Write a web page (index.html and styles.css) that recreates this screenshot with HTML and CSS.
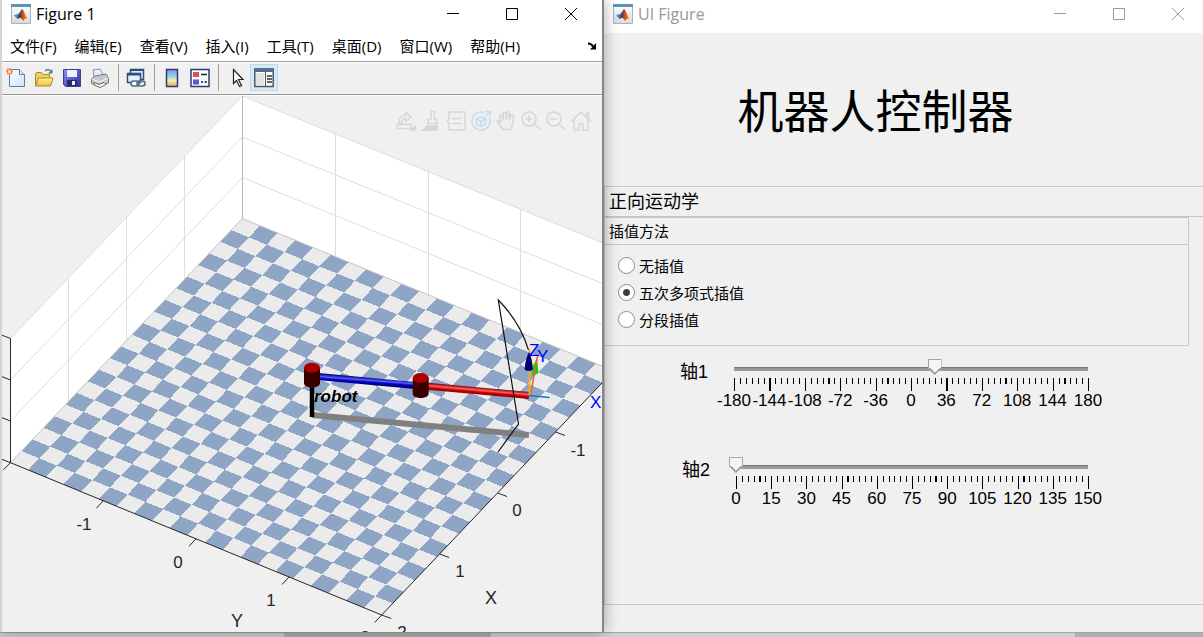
FILE: index.html
```html
<!DOCTYPE html>
<html lang="zh-CN">
<head>
<meta charset="utf-8">
<title>机器人控制器</title>
<link rel="stylesheet" href="styles.css">
</head>
<body>
<svg class="defs" aria-hidden="true">
  <defs>
    <linearGradient id="paper" x1="0" y1="0" x2="1" y2="1"><stop offset="0" stop-color="#fff"/><stop offset="1" stop-color="#cfe0f5"/></linearGradient>
    <linearGradient id="frame" x1="0" y1="0" x2="0" y2="1"><stop offset="0" stop-color="#fff"/><stop offset="1" stop-color="#d6dade"/></linearGradient>
    <linearGradient id="flame" x1="0" y1="0" x2="1" y2="0"><stop offset="0" stop-color="#8c1d10"/><stop offset=".5" stop-color="#e0591c"/><stop offset="1" stop-color="#f6a032"/></linearGradient>
    <linearGradient id="map" x1="0" y1="0" x2="0" y2="1"><stop offset="0" stop-color="#a58be0"/><stop offset=".35" stop-color="#7fd0f0"/><stop offset=".65" stop-color="#f5f0a0"/><stop offset="1" stop-color="#f0a080"/></linearGradient>
    <linearGradient id="disk" x1="0" y1="0" x2="1" y2="1"><stop offset="0" stop-color="#8a90ee"/><stop offset="1" stop-color="#2a2f9c"/></linearGradient>
    <linearGradient id="fold" x1="0" y1="0" x2="0" y2="1"><stop offset="0" stop-color="#fff3a0"/><stop offset="1" stop-color="#f0c030"/></linearGradient>
    <symbol id="logo" viewBox="0 0 20 20">
      <path d="M.5 1h19v18.500h-19z" fill="url(#frame)" stroke="#a9b3bb"/>
      <path d="M0 0h20v3H0z" fill="#5f93b8"/>
      <path d="M3 11.500l5-2 2 2.500-3.500 3z" fill="#3c8cc8"/>
      <path d="M8 9.500l3-4.500-1 8-3.500 2z" fill="#26506e"/>
      <path d="M11 5c2 1 3 7 6 10-2-1-3.500-.5-4.500 2-1-.5-1.500-3-4-3.500 1-2 1.500-6 2.500-8.500z" fill="url(#flame)"/>
    </symbol>
  </defs>
</svg>
<main class="desktop">
  <section class="window window-figure">
    <header class="titlebar">
      <svg class="logo"><use href="#logo"/></svg>
      <h2 class="caption">Figure 1</h2>
      <div class="controls">
        <button class="control" aria-label="最小化"><svg viewBox="0 0 14 14"><path d="M1 6.500h12"/></svg></button>
        <button class="control" aria-label="最大化"><svg viewBox="0 0 14 14"><path d="M1.500 1.500h11v11h-11z"/></svg></button>
        <button class="control" aria-label="关闭"><svg viewBox="0 0 14 14"><path d="M1 1l12 12M13 1L1 13"/></svg></button>
      </div>
    </header>
    <nav class="menu">
      <button class="menu-item">文件(F)</button>
      <button class="menu-item">编辑(E)</button>
      <button class="menu-item">查看(V)</button>
      <button class="menu-item">插入(I)</button>
      <button class="menu-item">工具(T)</button>
      <button class="menu-item">桌面(D)</button>
      <button class="menu-item">窗口(W)</button>
      <button class="menu-item">帮助(H)</button>
      <button class="dock" aria-label="停靠"><svg viewBox="0 0 10 8"><path d="M1 1.500c3 0 4 1 5 3" fill="none" stroke="#000" stroke-width="2"/><path d="M9 1v6.500H3z"/></svg></button>
    </nav>
    <div class="toolbar">
      <button class="tool" aria-label="新建"><svg viewBox="0 0 20 20"><path d="M3.500 1.500h10l5 5v12h-15z" fill="url(#paper)" stroke="#5d7ba5"/><path d="M13.500 1.500v5h5" fill="#dbe8f8" stroke="#5d7ba5"/><path d="M3.500 0v7M0 3.500h7M1 1l5 5M6 1L1 6" stroke="#e8783c" stroke-width="1.300"/><circle cx="3.500" cy="3.500" r="1.500" fill="#fff0b0"/></svg></button>
      <button class="tool" aria-label="打开"><svg viewBox="0 0 20 20"><path d="M1.500 17.500V5.500l1-1h5l2 2h6v4" fill="#f0d060" stroke="#b08a20"/><path d="M1.500 18l3-8h14.500l-2.500 8z" fill="url(#fold)" stroke="#b08a20"/><path d="M11 3c2-2 4-2 5.500 0" fill="none" stroke="#5d7590" stroke-width="1.500"/><path d="M18.500 1v4.500h-4.500z" fill="#5d7590"/></svg></button>
      <button class="tool" aria-label="保存"><svg viewBox="0 0 20 20"><path d="M1.500 1.500h17v17h-15l-2-2z" fill="url(#disk)" stroke="#39408f"/><path d="M5 2h10v7H5z" fill="#eef1fb"/><path d="M5 12h10v6H5z" fill="#23296b"/><path d="M10 13h3v4h-3z" fill="#eef1fb"/></svg></button>
      <button class="tool" aria-label="打印"><svg viewBox="0 0 20 20"><path d="M4 9L3 2l7-1 4 7" fill="#e4eefb" stroke="#8495aa"/><path d="M1.500 11L5 8l11-2 2.500 4v5L9 18.500l-7.500-3z" fill="#c6c8ca" stroke="#77797c"/><path d="M2 11l7 3 9.500-4" fill="none" stroke="#f7f7f7"/><path d="M4 14.500l5 2 5-2 2 2-6 3-6-2.500z" fill="#fff" stroke="#66696c"/></svg></button>
      <span class="rule"></span>
      <button class="tool" aria-label="链接"><svg viewBox="0 0 20 20"><path d="M4.500 1.500h13v10h-13z" fill="#dce8f6" stroke="#2c4d7d" stroke-width="1.500"/><path d="M1.500 5.500h13v9h-13z" fill="#e8f1fb" stroke="#2c4d7d" stroke-width="1.500"/><path d="M1 5h14v2.500H1zM4 1h14v2H4z" fill="#2c4d7d"/><rect x="5" y="13" width="8" height="5" rx="2.500" fill="#fff" stroke="#4f6b90" stroke-width="1.600"/><rect x="11" y="13" width="8" height="5" rx="2.500" fill="none" stroke="#4f6b90" stroke-width="1.600"/></svg></button>
      <span class="rule"></span>
      <button class="tool" aria-label="颜色栏"><svg viewBox="0 0 20 20"><path d="M4.500 1.500h11v17h-11z" fill="url(#map)" stroke="#2b3f6d" stroke-width="1.500"/></svg></button>
      <button class="tool" aria-label="图例"><svg viewBox="0 0 20 20"><path d="M1 1.500h18v17H1z" fill="#f7fafe" stroke="#2b3f6d" stroke-width="1.500"/><path d="M3 4h6v5H3z" fill="#e0504c"/><path d="M3 11.500h6v5H3z" fill="#5a5ad8"/><path d="M11 6.500h6M11 14h2M14.500 14h2.500" stroke="#222" stroke-width="1.500"/></svg></button>
      <span class="rule"></span>
      <button class="tool tool-pointer" aria-label="编辑绘图"><svg viewBox="0 0 20 20"><path d="M6.500 1.500v14l3-3 3 6 2-1-3-6h4.500z" fill="#fff" stroke="#222" stroke-width="1.200"/></svg></button>
      <button class="tool tool-active" aria-label="属性检查器"><svg viewBox="0 0 20 20"><path d="M.8 1h18.400v17.500H.8z" fill="#fff" stroke="#4b5660" stroke-width="1.500"/><path d="M.5.5h19V4H.5z" fill="#4d7295"/><path d="M2 5h8v12.500H2z" fill="#e3e3e3"/><path d="M11.500 4v14" stroke="#4b5660"/><path d="M13 8h5M13 11h5M13 14h5" stroke="#333" stroke-width="1.500"/></svg></button>
    </div>
    <div class="plot">
      <svg class="scene" viewBox="2 96 600 537" preserveAspectRatio="xMinYMin slice" role="img" aria-label="机械臂三维图">
        <defs>
          <linearGradient id="linkBlue" gradientUnits="userSpaceOnUse" x1="366" y1="377" x2="365.400" y2="385"><stop offset="0" stop-color="#000070"/><stop offset=".4" stop-color="#5a5aff"/><stop offset=".6" stop-color="#0000c8"/><stop offset="1" stop-color="#000060"/></linearGradient>
          <linearGradient id="linkRed" gradientUnits="userSpaceOnUse" x1="478" y1="387" x2="477.300" y2="395"><stop offset="0" stop-color="#700000"/><stop offset=".4" stop-color="#ff6060"/><stop offset=".6" stop-color="#d00000"/><stop offset="1" stop-color="#700000"/></linearGradient>
        </defs>
        <path d="M10.500 338.500L242.300 96 613.500 248V371L242.300 218.500 10.500 462.700z" fill="#fff"/>
        <path class="grid" d="M10.500 338.500L242.300 96 613.500 247M10.500 380L242.300 137 613.500 288M10.500 421L242.300 177.500 613.500 329M68.500 278V402M126.500 217V341M184.500 156V280M335.500 134V257M428.500 172V295M520.500 210V333"/>
        <path d="M242.500 96V218.500" stroke="#b5b5b5"/>
        <path d="M10.500 462.700L242.300 218.500 613.500 370.800 381.700 615z" fill="#ebebeb"/>
        <g transform="matrix(17.676 7.252 11.038 -11.629 10.500 462.700)" class="tiles">
          <path d="M1 .5H21M1 2.500H21M1 4.500H21M1 6.500H21M1 8.500H21M1 10.500H21M1 12.500H21M1 14.500H21M1 16.500H21M1 18.500H21M1 20.500H21"/>
          <path d="M0 1.500H21M0 3.500H21M0 5.500H21M0 7.500H21M0 9.500H21M0 11.500H21M0 13.500H21M0 15.500H21M0 17.500H21M0 19.500H21"/>
        </g>
        <path d="M10.500 462.700L242.300 218.500 613.500 370.800" fill="none" stroke="#c4c4c4"/>
        <path class="axis" d="M10.500 338.500V462.700L381.700 615 613.500 370.800M10.500 338.500l-9-3.500M10.500 380l-9-3.500M10.500 421l-9-3.500M10.500 462.700l-9-3.500M10.500 462.700l-7 7M103.300 500.800l-7 7.500M196 538.800l-7 7.500M289 577l-7 7.500M381.700 615l-7 7.500M381.700 615l9.500 3.500M439.700 554l9.500 3.500M497.600 493l9.500 3.500M555.500 432l9.500 3.500"/>
        <g class="tick-text">
          <text x="84" y="530">-1</text><text x="178" y="568">0</text><text x="271" y="606">1</text><text x="365" y="643">2</text>
          <text x="402" y="638">2</text><text x="460" y="577">1</text><text x="517" y="516">0</text><text x="578" y="456">-1</text>
          <text class="axis-name" x="237" y="627">Y</text><text class="axis-name" x="491" y="604">X</text>
        </g>
        <path d="M312 415L529 435" stroke="#808080" stroke-width="6"/>
        <path d="M312 386V417" stroke="#000" stroke-width="4.500"/>
        <path d="M318 376.500L415 385.500" stroke="url(#linkBlue)" stroke-width="7"/>
        <path d="M425 386L529 395.500" stroke="url(#linkRed)" stroke-width="7"/>
        <path d="M304 368v15c0 6 16 6 16 0v-15zM412.700 378v15.500c0 6 16 6 16 0V378z" fill="#3a0000"/>
        <ellipse cx="312" cy="367.800" rx="8" ry="5" fill="#a80000"/>
        <ellipse cx="420.700" cy="378" rx="8" ry="5" fill="#a80000"/>
        <path d="M528.500 350C524 335 517 319 498.300 300L518.500 424 498 452" fill="none" stroke="#111" stroke-width="1.200"/>
        <path d="M537 358l1.500 15-6.500 3 1-10z" fill="#00d800"/>
        <path d="M537.500 356L530.500 395" stroke="#f0602a" stroke-width="1.500"/>
        <path d="M529.500 349V396" stroke="#edb120" stroke-width="1.800"/>
        <path d="M529 395.500L549.500 397.500" stroke="#0080c8" stroke-width="1.500"/>
        <path d="M529 352c2 4 3.500 10 4 17.500q-4 3-8.500 0C525 362 527 356 529 352z" fill="#00006c"/>
        <g class="frame-text"><text x="529" y="356">Z</text><text x="537" y="362">Y</text><text x="590" y="408">X</text></g>
        <text class="robot-name" x="314" y="402">robot</text>
      </svg>
      <div class="axes-tools">
        <button class="axes-tool" aria-label="导出"><svg viewBox="0 0 22 22"><path d="M2 14.500h14v4H2zM4 13c0-5 3-8 7-8V2l5 5-5 4.500V8.500c-3 0-4 2-4 4.500z"/><path d="M20 16v4h-4z" fill="#d6d6d6"/></svg></button>
        <button class="axes-tool" aria-label="刷亮"><svg viewBox="0 0 22 22"><path d="M11 1.500h3.500v8H17v4H8v-4h3zM8 13.500c-1 3-2.500 5-5 6.500h14v-6"/><path d="M7.500 16h9v4H4z" fill="#d6d6d6"/></svg></button>
        <button class="axes-tool" aria-label="数据提示"><svg viewBox="0 0 22 22"><path d="M4 2h16v18H4v-6.500l-2-2.500 2-2.500zM7 8.500h9M7 13.500h9"/></svg></button>
        <button class="axes-tool axes-tool-on" aria-label="三维旋转"><svg viewBox="0 0 22 22"><path d="M14 2.500A9 9 0 1 0 19.500 8M15 1.500h5v5M15.500 6l4-4M11 6.500l4.500 2.500v5L11 16.500 6.500 14V9zM6.500 9l4.500 2.500L15.500 9M11 11.500v5"/></svg></button>
        <button class="axes-tool" aria-label="平移"><svg viewBox="0 0 22 22"><path d="M8 19.500c-2-3-4-5-6-8 1-1.500 2.500-1 4 1.500L4.500 5.500C5 4 6.500 4 7 5.500L8.500 10 8 3c.5-1.500 2-1.500 2.500 0l.7 7 .8-7.500c.8-1.500 2.300-1 2.500.5L14 10.500l2-5.500c1-1.500 2.500-.5 2.500 1-.5 5-.5 10-3 13.500z"/></svg></button>
        <button class="axes-tool" aria-label="放大"><svg viewBox="0 0 22 22"><circle cx="9" cy="9" r="7"/><path d="M14.500 14.500l6 5.500M9 5.500v7M5.500 9h7"/></svg></button>
        <button class="axes-tool" aria-label="缩小"><svg viewBox="0 0 22 22"><circle cx="9" cy="9" r="7"/><path d="M14.500 14.500l6 5.500M5.500 9h7"/></svg></button>
        <button class="axes-tool" aria-label="还原视图"><svg viewBox="0 0 22 22"><path d="M1.500 11.500L11 2l9.500 9.500M16.500 7V3h2v6M4 10v10h5v-6h4v6h5V10"/></svg></button>
      </div>
    </div>
  </section>
  <section class="window window-ui">
    <header class="titlebar titlebar-idle">
      <svg class="logo"><use href="#logo"/></svg>
      <h2 class="caption">UI Figure</h2>
      <div class="controls">
        <button class="control" aria-label="最小化"><svg viewBox="0 0 14 14"><path d="M1 6.500h12"/></svg></button>
        <button class="control" aria-label="最大化"><svg viewBox="0 0 14 14"><path d="M1.500 1.500h11v11h-11z"/></svg></button>
        <button class="control" aria-label="关闭"><svg viewBox="0 0 14 14"><path d="M1 1l12 12M13 1L1 13"/></svg></button>
      </div>
    </header>
    <h1 class="heading">机器人控制器</h1>
    <section class="panel">
      <h3 class="panel-title">正向运动学</h3>
      <fieldset class="group">
        <legend class="group-title">插值方法</legend>
        <label class="option"><input class="radio" type="radio" name="interp">无插值</label>
        <label class="option"><input class="radio" type="radio" name="interp" checked>五次多项式插值</label>
        <label class="option"><input class="radio" type="radio" name="interp">分段插值</label>
      </fieldset>
      <div class="sliders">
        <div class="slider">
          <label class="slider-label" for="axis1">轴1</label>
          <div class="gauge">
            <input class="range" id="axis1" type="range" min="-180" max="180" value="24">
            <svg class="ticks" viewBox="0 0 354 13" preserveAspectRatio="none"><path d="M0 3H355" stroke-width="6" stroke-dasharray="1.100 4.800"/><path d="M0 6.500H355" stroke-width="13" stroke-dasharray="1.100 34.300"/></svg>
            <div class="scale"><span>-180</span><span>-144</span><span>-108</span><span>-72</span><span>-36</span><span>0</span><span>36</span><span>72</span><span>108</span><span>144</span><span>180</span></div>
          </div>
        </div>
        <div class="slider slider-second">
          <label class="slider-label" for="axis2">轴2</label>
          <div class="gauge">
            <input class="range" id="axis2" type="range" min="0" max="150" value="0">
            <svg class="ticks" viewBox="0 0 354 13" preserveAspectRatio="none"><path d="M0 3H355" stroke-width="6" stroke-dasharray="1.100 4.800"/><path d="M0 6.500H355" stroke-width="13" stroke-dasharray="1.100 34.300"/></svg>
            <div class="scale"><span>0</span><span>15</span><span>30</span><span>45</span><span>60</span><span>75</span><span>90</span><span>105</span><span>120</span><span>135</span><span>150</span></div>
          </div>
        </div>
      </div>
    </section>
  </section>
</main>
<footer class="backdrop"><span></span><span class="dark"></span><span></span><span class="dark"></span></footer>
</body>
</html>
```

FILE: styles.css
```css
* { box-sizing: border-box; }

body {
  margin: 0;
  height: 100vh;
  display: flex;
  flex-direction: column;
  overflow: hidden;
  background: #d0d0d0;
  color: #000;
  font-family: "Open Sans", "Noto Sans CJK SC", sans-serif;
  font-size: 15px;
}

button {
  padding: 0;
  border: 0;
  background: none;
  color: inherit;
  font: inherit;
}

h1, h2, h3 { margin: 0; font-weight: 400; }

.defs { position: absolute; width: 0; height: 0; }

.desktop {
  flex: 1;
  min-height: 0;
  display: grid;
  grid-template-columns: 604fr 599fr;
}

.window {
  display: flex;
  flex-direction: column;
  min-width: 0;
  min-height: 0;
  background: #f0f0f0;
}

.window-figure {
  z-index: 1;
  border-left: 2px solid #d4d4d4;
  border-right: 2px solid #868686;
  box-shadow: 0 0 14px rgba(0, 0, 0, 0.35);
}

.titlebar {
  display: flex;
  align-items: center;
  height: 28px;
  padding: 0 6px 0 9px;
  gap: 5px;
  background: #fff;
}

.titlebar-idle {
  height: 33px;
  padding: 0 0 5px 9px;
  color: #999;
}

.logo { width: 20px; height: 20px; }
.caption { flex: 1; font-size: 16px; line-height: 20px; }
.controls { display: flex; gap: 9px; }

.control {
  display: grid;
  place-items: center;
  width: 50px;
  height: 28px;
}

.control svg {
  width: 14px;
  height: 14px;
  fill: none;
  stroke: currentColor;
}

.menu {
  display: flex;
  align-items: center;
  gap: 18px;
  height: 34px;
  padding: 3px 5px 0 8px;
  border-bottom: 1px solid #a0a0a0;
  background: #fff;
}

.menu-item { line-height: 20px; white-space: nowrap; }
.dock { margin-left: auto; }
.dock svg { display: block; width: 10px; height: 8px; }

.toolbar {
  display: flex;
  align-items: center;
  gap: 8px;
  height: 33px;
  padding: 0 0 2px 4px;
  border-top: 1px solid #fff;
  border-bottom: 1px solid #989898;
}

.tool {
  display: grid;
  place-items: center;
  width: 20px;
  height: 27px;
}

.tool svg { width: 20px; height: 20px; }
.tool-pointer { width: 22px; }

.tool-active {
  width: 28px;
  margin-left: -6px;
  border: 1px solid #b9d9f2;
  background: #d9e9f6;
}

.rule {
  width: 1px;
  height: 27px;
  margin-right: -1px;
  background: #a0a0a0;
}

.plot {
  position: relative;
  flex: 1;
  min-height: 0;
  overflow: hidden;
  border-top: 1px solid #fff;
}

.scene { display: block; width: 100%; height: 100%; }
.grid { fill: none; stroke: #dedede; }

.tiles {
  fill: none;
  stroke: #8fa5c5;
  stroke-width: 1;
  stroke-dasharray: 1 1;
  shape-rendering: crispEdges;
}

.axis { fill: none; stroke: #262626; }

.tick-text {
  fill: #262626;
  font: 17px "Liberation Sans", sans-serif;
  text-anchor: middle;
}

.axis-name { font-size: 18px; }
.frame-text { fill: #0000ff; font: 17px "Liberation Sans", sans-serif; }
.robot-name { font: italic 700 17px "Liberation Sans", sans-serif; }

.axes-tools {
  position: absolute;
  top: 14px;
  right: 10px;
  display: flex;
  gap: 3px;
}

.axes-tool { width: 22px; height: 22px; color: #d6d6d6; }
.axes-tool-on { color: #c0def2; }

.axes-tool svg {
  display: block;
  fill: none;
  stroke: currentColor;
  stroke-width: 1.5;
}

.heading {
  display: grid;
  place-items: center;
  height: 153px;
  padding: 0 56px 4px 0;
  font-family: KaiTi, "Noto Sans CJK SC", sans-serif;
  font-size: 46px;
  line-height: 60px;
}

.panel {
  flex: 1;
  display: flex;
  flex-direction: column;
  margin-bottom: 27px;
  border: 1px solid #cacaca;
  border-right: 0;
}

.panel-title {
  padding-left: 4px;
  border-bottom: 1px solid #c4c4c4;
  font-size: 18px;
  line-height: 29px;
}

.group {
  display: flex;
  flex-direction: column;
  min-width: 0;
  height: 129px;
  margin: 0 14px 0 0;
  padding: 0;
  border: 1px solid #cacaca;
  border-left: 0;
}

.group-title {
  float: left;
  width: 100%;
  margin-bottom: 7px;
  padding: 0 0 0 4px;
  border-bottom: 1px solid #cacaca;
  line-height: 26px;
}

.option {
  display: flex;
  align-items: center;
  gap: 4px;
  height: 27px;
  padding-left: 13px;
}

.radio {
  appearance: none;
  width: 17px;
  height: 17px;
  margin: 0;
  border: 1px solid #8c8c8c;
  border-radius: 50%;
  background: #fff;
}

.radio:checked { background: radial-gradient(circle, #3c3c3c 3px, #fff 4px); }

.sliders {
  display: flex;
  flex-direction: column;
  gap: 46px;
  padding: 13px 115px 0 75px;
  font-family: "Liberation Sans", "Noto Sans CJK SC", sans-serif;
}

.slider { display: flex; }
.slider-second { padding-left: 2px; }
.slider-label { width: 54px; font-size: 18px; line-height: 26px; }
.gauge { flex: 1; min-width: 0; }

.range {
  appearance: none;
  display: block;
  width: calc(100% + 14px);
  height: 16px;
  margin: 0 -7px;
  background: linear-gradient(#777 0 1px, #999 1px) center bottom 4px / calc(100% - 14px) 4px no-repeat;
}

.range::-webkit-slider-thumb {
  appearance: none;
  width: 14px;
  height: 16px;
  background:
    linear-gradient(225deg, #f5f5f5 calc(50% - 2px), #a5a5a5 0) 0 9px / 7px 7px no-repeat,
    linear-gradient(135deg, #f5f5f5 calc(50% - 2px), #a5a5a5 0) 7px 9px / 7px 7px no-repeat,
    linear-gradient(#f5f5f5, #f5f5f5) 1px 1px / 12px 8px no-repeat,
    #a5a5a5;
  clip-path: polygon(0 0, 100% 0, 100% 9px, 50% 100%, 0 9px);
}

.ticks {
  display: block;
  width: 100%;
  height: 13px;
  margin-top: 3px;
  overflow: visible;
  stroke: #000;
  shape-rendering: crispEdges;
}

.scale {
  display: flex;
  justify-content: space-between;
  font-size: 17px;
  line-height: 20px;
}

.scale span {
  display: flex;
  justify-content: center;
  width: 0;
}

.backdrop {
  display: grid;
  grid-template-columns: 284fr 207fr 584fr 128fr;
  height: 5px;
  border-top: 1px solid #a4a4a4;
}

.backdrop .dark { background: #b0b0b0; }
```
